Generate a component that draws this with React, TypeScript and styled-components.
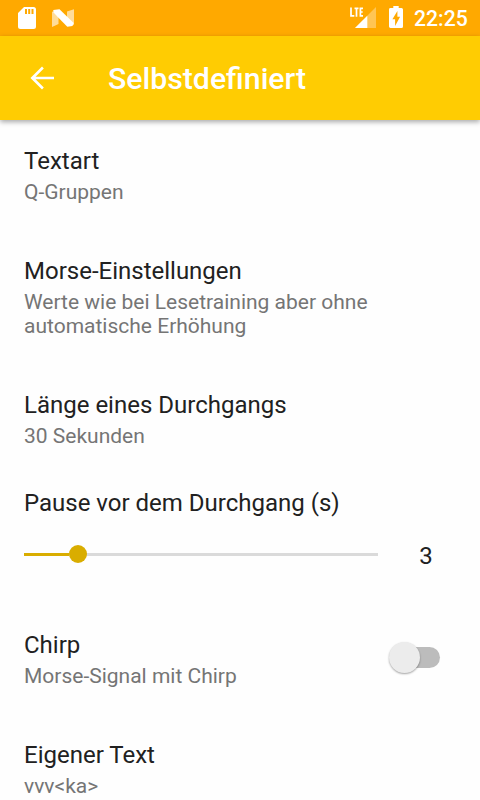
import React from 'react';
import styled, { createGlobalStyle } from 'styled-components';

const GlobalStyle = createGlobalStyle`
  * { box-sizing: border-box; }
  html, body { margin: 0; background: #fefefe; overflow: hidden; }
  body { font-family: Roboto, sans-serif; color: #212121; }
  svg { display: block; flex: none; }
`;

const Screen = styled.div`
  width: 480px;
  height: 800px;
  overflow: hidden;
  background: #fefefe;
  display: flex;
  flex-direction: column;
`;

const StatusBar = styled.header`
  flex: none;
  height: 36px;
  padding: 0 12px 0 18px;
  background: #ffa900;
  color: #fff;
  display: flex;
  justify-content: space-between;
`;

const StatusIcons = styled.div<{ $gap: number }>`
  display: flex;
  align-items: flex-start;
  gap: ${({ $gap }) => $gap}px;
`;

const Clock = styled.span`
  width: 54px;
  margin-left: -2px;
  font-size: 21.2px;
  font-weight: 500;
  line-height: 38px;
`;

const AppBar = styled.div`
  flex: none;
  height: 84px;
  padding-left: 24px;
  background: #ffcc02;
  color: #fff;
  display: flex;
  align-items: center;
  gap: 48px;
  position: relative;
  box-shadow: 0 2px 5px rgba(0, 0, 0, 0.34);
`;

const AppTitle = styled.h1`
  margin: 0;
  padding-top: 2px;
  font-size: 30.250px;
  font-weight: 500;
  line-height: 36px;
`;

const Preference = styled.div`
  flex: none;
  padding: 24px 40px 26px 24px;
  display: flex;
  align-items: center;
  justify-content: space-between;
`;

const Title = styled.div`
  font-size: 24px;
  line-height: 34px;
  white-space: nowrap;
`;

const Summary = styled.div`
  margin-top: 2px;
  max-width: 380px;
  font-size: 21px;
  line-height: 24px;
  color: #757575;
`;

const SliderPreference = styled.div`
  flex: none;
  height: 130px;
  padding: 12px 0 0 24px;
`;

const SliderRow = styled.div`
  height: 69px;
  display: flex;
  align-items: center;
`;

const Track = styled.div`
  flex: none;
  width: 354px;
  height: 3px;
  background: #dadada;
  display: flex;
  align-items: center;
`;

const Progress = styled.div`
  flex: none;
  width: 44.5px;
  height: 3px;
  background: #d9ad00;
`;

const SliderThumb = styled.div`
  flex: none;
  width: 18px;
  height: 18px;
  margin-bottom: 1px;
  border-radius: 50%;
  background: #d9ad00;
`;

const SliderValue = styled.div`
  width: 96px;
  padding-top: 2px;
  text-align: center;
  font-size: 24px;
  line-height: 28px;
`;

const SwitchTrack = styled.div`
  width: 46px;
  height: 21px;
  margin-bottom: 1px;
  border-radius: 11px;
  background: #bcbcbc;
  display: flex;
  align-items: center;
`;

const SwitchThumb = styled.div`
  flex: none;
  width: 31px;
  height: 31px;
  margin-left: -5px;
  border-radius: 50%;
  background: #ececec;
  box-shadow: 0 1px 2px rgba(0, 0, 0, 0.36);
`;

const SdCardIcon = () => (
  <svg width="18" height="36" viewBox="0 0 18 36">
    <path fill="#fff" fillRule="evenodd" d="M6 7h9.500Q18 7 18 9.500v17Q18 29 15.500 29H2.500Q0 29 0 26.500V13Zm1 2v5h2V9Zm3.200 0v5h2V9Zm3.300 0v5h2V9Z" />
  </svg>
);

const NougatIcon = () => (
  <svg width="22" height="36" viewBox="52 0 22 36">
    <path fill="#fff" opacity=".6" d="m52 11.200 6.500 5.800v7L52 27ZM67 11.500l7-2.300v16L67 19Z" />
    <path fill="#fff" d="M53.300 10 59.500 9.300 73.700 23 72.500 26l-5.200.7L53.300 12.500Z" />
  </svg>
);

const SignalIcon = () => (
  <svg width="27" height="36" viewBox="349 0 27 36">
    <path fill="#fff" opacity=".33" d="M376 7v21h-21Z" />
    <path fill="#fff" d="M367.300 15.700V28H355Z" />
    <path fill="none" stroke="#fff" strokeWidth="1.700" d="M351 7.500v8.400h3.300M354.500 8.300h4M356.500 8v8.700M363 8.300h-2.600v7.600h2.600M360.400 12h2.300" />
  </svg>
);

const BatteryIcon = () => (
  <svg width="14" height="36" viewBox="389 0 14 36">
    <path fill="#fff" d="M393.300 6h5.400v2h2.800q1.500 0 1.500 1.500V26.500q0 1.500-1.500 1.500h-11q-1.500 0-1.500-1.500V9.500Q389 8 390.500 8h2.800Z" />
    <path fill="#ffa900" d="M397.400 11v5.700h2.700l-5 9.300v-6.700h-2.700Z" />
  </svg>
);

const BackIcon = () => (
  <svg width="36" height="36" viewBox="0 0 24 24">
    <path fill="#fff" d="M20 11.100H7.700l5.500-5.500L12 4.400 4.300 12l7.700 7.600 1.200-1.200-5.500-5.500H20Z" />
  </svg>
);

type ItemProps = { title: string; summary: string; children?: React.ReactNode };

const Item = ({ title, summary, children }: ItemProps) => (
  <Preference>
    <div>
      <Title>{title}</Title>
      <Summary>{summary}</Summary>
    </div>
    {children}
  </Preference>
);

export default function App() {
  return (
    <Screen>
      <GlobalStyle />
      <StatusBar>
        <StatusIcons $gap={16}>
          <SdCardIcon />
          <NougatIcon />
        </StatusIcons>
        <StatusIcons $gap={13}>
          <SignalIcon />
          <BatteryIcon />
          <Clock>22:25</Clock>
        </StatusIcons>
      </StatusBar>
      <AppBar>
        <BackIcon />
        <AppTitle>Selbstdefiniert</AppTitle>
      </AppBar>
      <Item title="Textart" summary="Q-Gruppen" />
      <Item title="Morse-Einstellungen" summary="Werte wie bei Lesetraining aber ohne automatische Erhöhung" />
      <Item title="Länge eines Durchgangs" summary="30 Sekunden" />
      <SliderPreference>
        <Title>Pause vor dem Durchgang (s)</Title>
        <SliderRow>
          <Track>
            <Progress />
            <SliderThumb />
          </Track>
          <SliderValue>3</SliderValue>
        </SliderRow>
      </SliderPreference>
      <Item title="Chirp" summary="Morse-Signal mit Chirp">
        <SwitchTrack>
          <SwitchThumb />
        </SwitchTrack>
      </Item>
      <Item title="Eigener Text" summary="vvv<ka>" />
    </Screen>
  );
}
